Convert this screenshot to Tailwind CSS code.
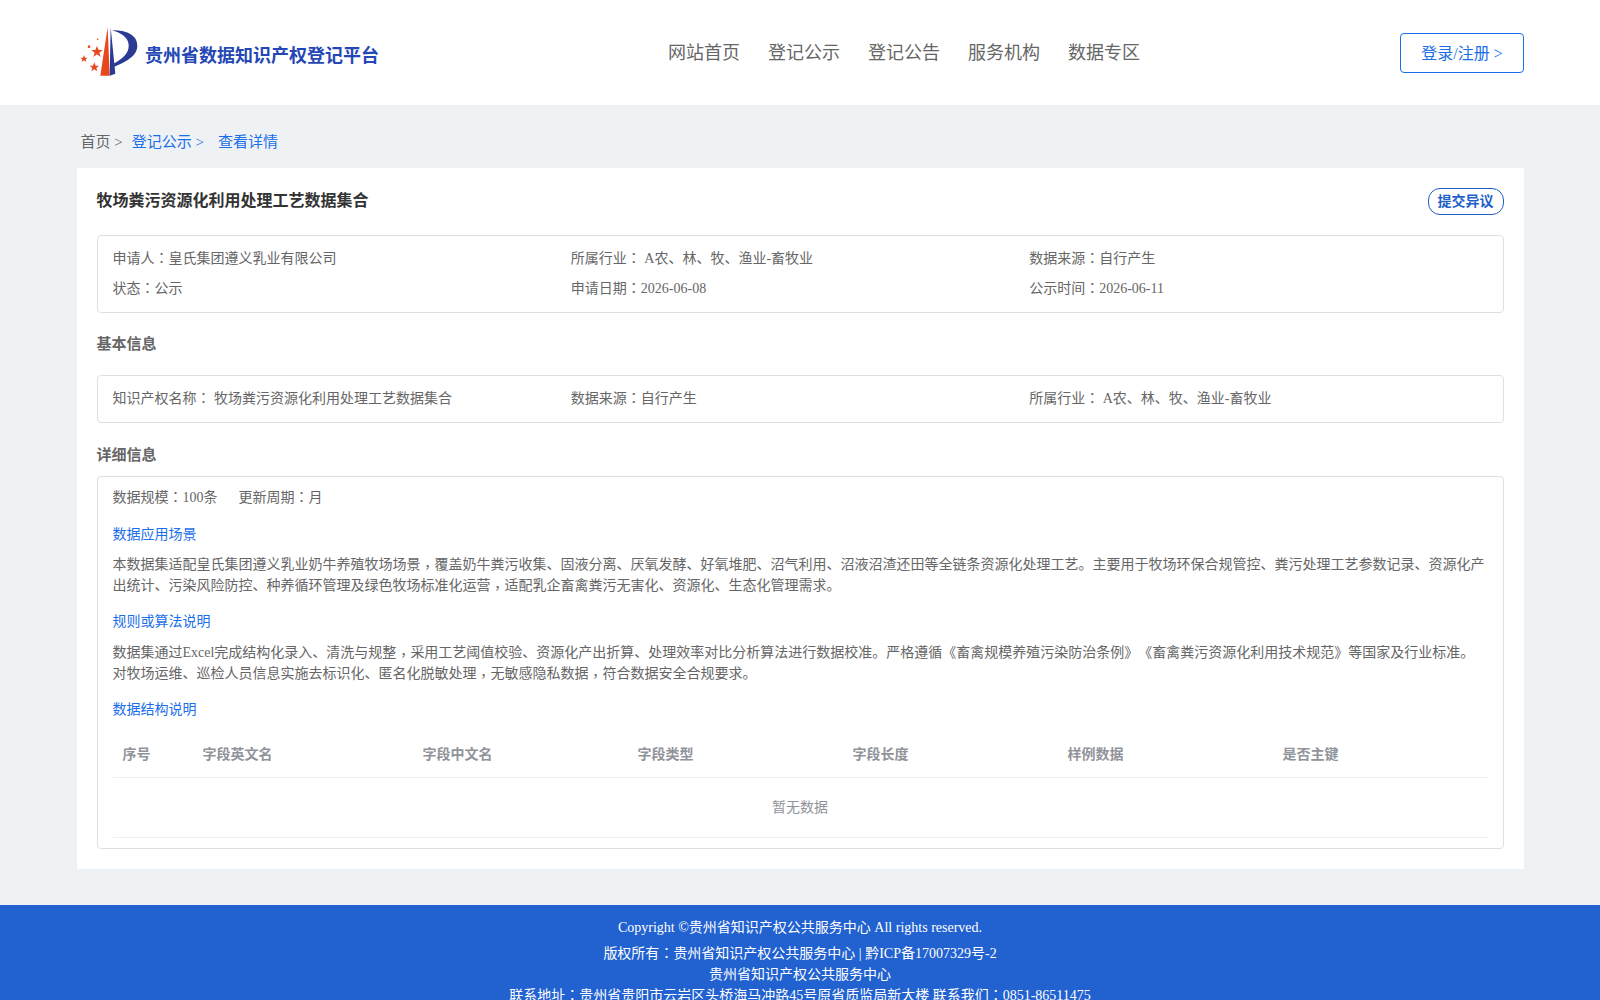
<!DOCTYPE html>
<html lang="zh-CN">
<head>
    <meta charset="UTF-8">
    <title>贵州省数据知识产权登记平台</title>
    <script src="https://cdn.jsdelivr.net/npm/@tailwindcss/browser@4"></script>
</head>
<body class="bg-[#eff2f5] font-['Liberation_Serif','Noto_Sans_CJK_SC',serif] text-[14px] text-[#666] [text-spacing-trim:space-all]">
    <!-- Header -->
    <header class="h-[105px] bg-white">
        <div class="flex h-full items-center pl-[80px] pr-[76px]">
            <div class="flex w-[588px] items-center">
                <svg class="mb-[2px] h-[54px] w-[60px] shrink-0" viewBox="30 20 180 160">
                    <path fill="#e8481c" d="M113 26 L119 171 L91 171 Z"/>
                    <path fill="#2b3a92" d="M122 26 L136 165 L119 171 Z"/>
                    <path fill="#2b3a92" d="M126 35 C172 34 202 50 202 82 C202 112 165 132 130 145 L129 136 C155 122 178 105 176 78 C174 54 150 42 126 35 Z"/>
                    <path fill="#e8481c" d="M81 82 L86 94 L98 94 L88 102 L92 115 L81 107 L70 115 L74 102 L64 94 L76 94 Z"/>
                    <path fill="#e8481c" d="M42 109 L45 117 L53 117 L47 122 L49 130 L42 125 L35 130 L37 122 L31 117 L39 117 Z"/>
                    <path fill="#e8481c" d="M73 131 L77 141 L87 141 L79 148 L82 158 L73 152 L64 158 L67 148 L59 141 L69 141 Z"/>
                    <circle cx="57" cy="84" r="4" fill="#e8481c"/>
                    <circle cx="83" cy="62" r="2.5" fill="#e8481c"/>
                </svg>
                <span class="ml-[5px] pt-[8px] text-[18px] font-bold text-[#2447b5]">贵州省数据知识产权登记平台</span>
            </div>
            <nav class="flex gap-[28px] pt-[1px] text-[18px] text-[#666]">
                <a href="#">网站首页</a>
                <a href="#">登记公示</a>
                <a href="#">登记公告</a>
                <a href="#">服务机构</a>
                <a href="#">数据专区</a>
            </nav>
            <a href="#" class="ml-auto flex h-[40px] w-[124px] items-center justify-center rounded-[4px] border border-[#1a6fe8] pt-[2px] text-[16px] text-[#1a6fe8]">登录/注册 &gt;</a>
        </div>
    </header>

    <main class="px-[76.5px] pb-[36px]">
        <!-- Breadcrumb -->
        <div class="flex h-[63px] items-center pt-[12px] pl-[4px] text-[15px]">
            <span class="text-[#666]">首页 &gt;</span>
            <a href="#" class="ml-[9px] text-[#1a6fe8]">登记公示 &gt;</a>
            <a href="#" class="ml-[14px] text-[#1a6fe8]">查看详情</a>
        </div>

        <section class="bg-white px-[20px] pt-[20px] pb-[20px]">
            <div class="flex h-[27px] items-center justify-between">
                <h1 class="pb-[2px] text-[16px] font-bold text-[#333]">牧场粪污资源化利用处理工艺数据集合</h1>
                <button class="h-[27px] w-[76px] rounded-[12px] border border-[#1f5fc9] text-[14px] font-bold text-[#1f5fc9]">提交异议</button>
            </div>

            <!-- Summary -->
            <div class="mt-[20px] grid grid-cols-3 rounded-[4px] border border-[#e0e0e0] px-[15px] py-[8px] leading-[30px]">
                <div>申请人<span lang="zh-TW" class="font-['Noto_Sans_CJK_TC'] leading-none">：</span>皇氏集团遵义乳业有限公司</div>
                <div>所属行业<span lang="zh-TW" class="font-['Noto_Sans_CJK_TC'] leading-none">：</span> A农、林、牧、渔业-畜牧业</div>
                <div>数据来源<span lang="zh-TW" class="font-['Noto_Sans_CJK_TC'] leading-none">：</span>自行产生</div>
                <div>状态<span lang="zh-TW" class="font-['Noto_Sans_CJK_TC'] leading-none">：</span>公示</div>
                <div>申请日期<span lang="zh-TW" class="font-['Noto_Sans_CJK_TC'] leading-none">：</span>2026-06-08</div>
                <div>公示时间<span lang="zh-TW" class="font-['Noto_Sans_CJK_TC'] leading-none">：</span>2026-06-11</div>
            </div>

            <h2 class="mt-[20px] text-[15px] leading-[22px] font-bold text-[#666]">基本信息</h2>
            <div class="mt-[20px] grid grid-cols-3 rounded-[4px] border border-[#e0e0e0] px-[15px] py-[8px] leading-[30px]">
                <div>知识产权名称<span lang="zh-TW" class="font-['Noto_Sans_CJK_TC'] leading-none">：</span> 牧场粪污资源化利用处理工艺数据集合</div>
                <div>数据来源<span lang="zh-TW" class="font-['Noto_Sans_CJK_TC'] leading-none">：</span>自行产生</div>
                <div>所属行业<span lang="zh-TW" class="font-['Noto_Sans_CJK_TC'] leading-none">：</span> A农、林、牧、渔业-畜牧业</div>
            </div>

            <h2 class="mt-[21px] text-[15px] leading-[22px] font-bold text-[#666]">详细信息</h2>
            <div class="mt-[10px] rounded-[4px] border border-[#e0e0e0] px-[15px] pt-[10px] pb-[10px] leading-[21px]">
                <div class="flex gap-[21px]">
                    <span>数据规模<span lang="zh-TW" class="font-['Noto_Sans_CJK_TC'] leading-none">：</span>100条</span>
                    <span>更新周期<span lang="zh-TW" class="font-['Noto_Sans_CJK_TC'] leading-none">：</span>月</span>
                </div>
                <h3 class="mt-[16px] text-[#1a6fe8]">数据应用场景</h3>
                <p class="mt-[9px]">本数据集适配皇氏集团遵义乳业奶牛养殖牧场场景<span lang="zh-TW" class="relative top-[3px] font-['Noto_Sans_CJK_TC'] leading-none">，</span>覆盖奶牛粪污收集、固液分离、厌氧发酵、好氧堆肥、沼气利用、沼液沼渣还田等全链条资源化处理工艺。主要用于牧场环保合规管控、粪污处理工艺参数记录、资源化产出统计、污染风险防控、种养循环管理及绿色牧场标准化运营<span lang="zh-TW" class="relative top-[3px] font-['Noto_Sans_CJK_TC'] leading-none">，</span>适配乳企畜禽粪污无害化、资源化、生态化管理需求。</p>
                <h3 class="mt-[15px] text-[#1a6fe8]">规则或算法说明</h3>
                <p class="mt-[10px]">数据集通过Excel完成结构化录入、清洗与规整<span lang="zh-TW" class="relative top-[3px] font-['Noto_Sans_CJK_TC'] leading-none">，</span>采用工艺阈值校验、资源化产出折算、处理效率对比分析算法进行数据校准。严格遵循《畜禽规模养殖污染防治条例》《畜禽粪污资源化利用技术规范》等国家及行业标准。对牧场运维、巡检人员信息实施去标识化、匿名化脱敏处理<span lang="zh-TW" class="relative top-[3px] font-['Noto_Sans_CJK_TC'] leading-none">，</span>无敏感隐私数据<span lang="zh-TW" class="relative top-[3px] font-['Noto_Sans_CJK_TC'] leading-none">，</span>符合数据安全合规要求。</p>
                <h3 class="mt-[15px] text-[#1a6fe8]">数据结构说明</h3>
                <table class="mt-[10px] w-full table-fixed">
                    <colgroup>
                        <col class="w-[80px]">
                        <col class="w-[220px]">
                    </colgroup>
                    <thead>
                        <tr class="h-[47px] border-b border-[#ebeef5] text-left font-bold text-[#909399]">
                            <th class="pt-[2px] pl-[10px]">序号</th>
                            <th class="pt-[2px] pl-[10px]">字段英文名</th>
                            <th class="pt-[2px] pl-[10px]">字段中文名</th>
                            <th class="pt-[2px] pl-[10px]">字段类型</th>
                            <th class="pt-[2px] pl-[10px]">字段长度</th>
                            <th class="pt-[2px] pl-[10px]">样例数据</th>
                            <th class="pt-[2px] pl-[10px]">是否主键</th>
                        </tr>
                    </thead>
                    <tbody>
                        <tr class="h-[60px] border-b border-[#ebeef5]">
                            <td colspan="7" class="text-center text-[#909399]">暂无数据</td>
                        </tr>
                    </tbody>
                </table>
            </div>
        </section>
    </main>

    <!-- Footer -->
    <footer class="bg-[#2161d0] pt-[12px] pb-[4px] text-center leading-[21px] text-white">
        <p class="mb-[5px]">Copyright ©贵州省知识产权公共服务中心 All rights reserved.</p>
        <p>版权所有<span lang="zh-TW" class="font-['Noto_Sans_CJK_TC'] leading-none">：</span>贵州省知识产权公共服务中心 | 黔ICP备17007329号-2</p>
        <p>贵州省知识产权公共服务中心</p>
        <p>联系地址<span lang="zh-TW" class="font-['Noto_Sans_CJK_TC'] leading-none">：</span>贵州省贵阳市云岩区头桥海马冲路45号原省质监局新大楼 联系我们<span lang="zh-TW" class="font-['Noto_Sans_CJK_TC'] leading-none">：</span>0851-86511475</p>
    </footer>
</body>
</html>
